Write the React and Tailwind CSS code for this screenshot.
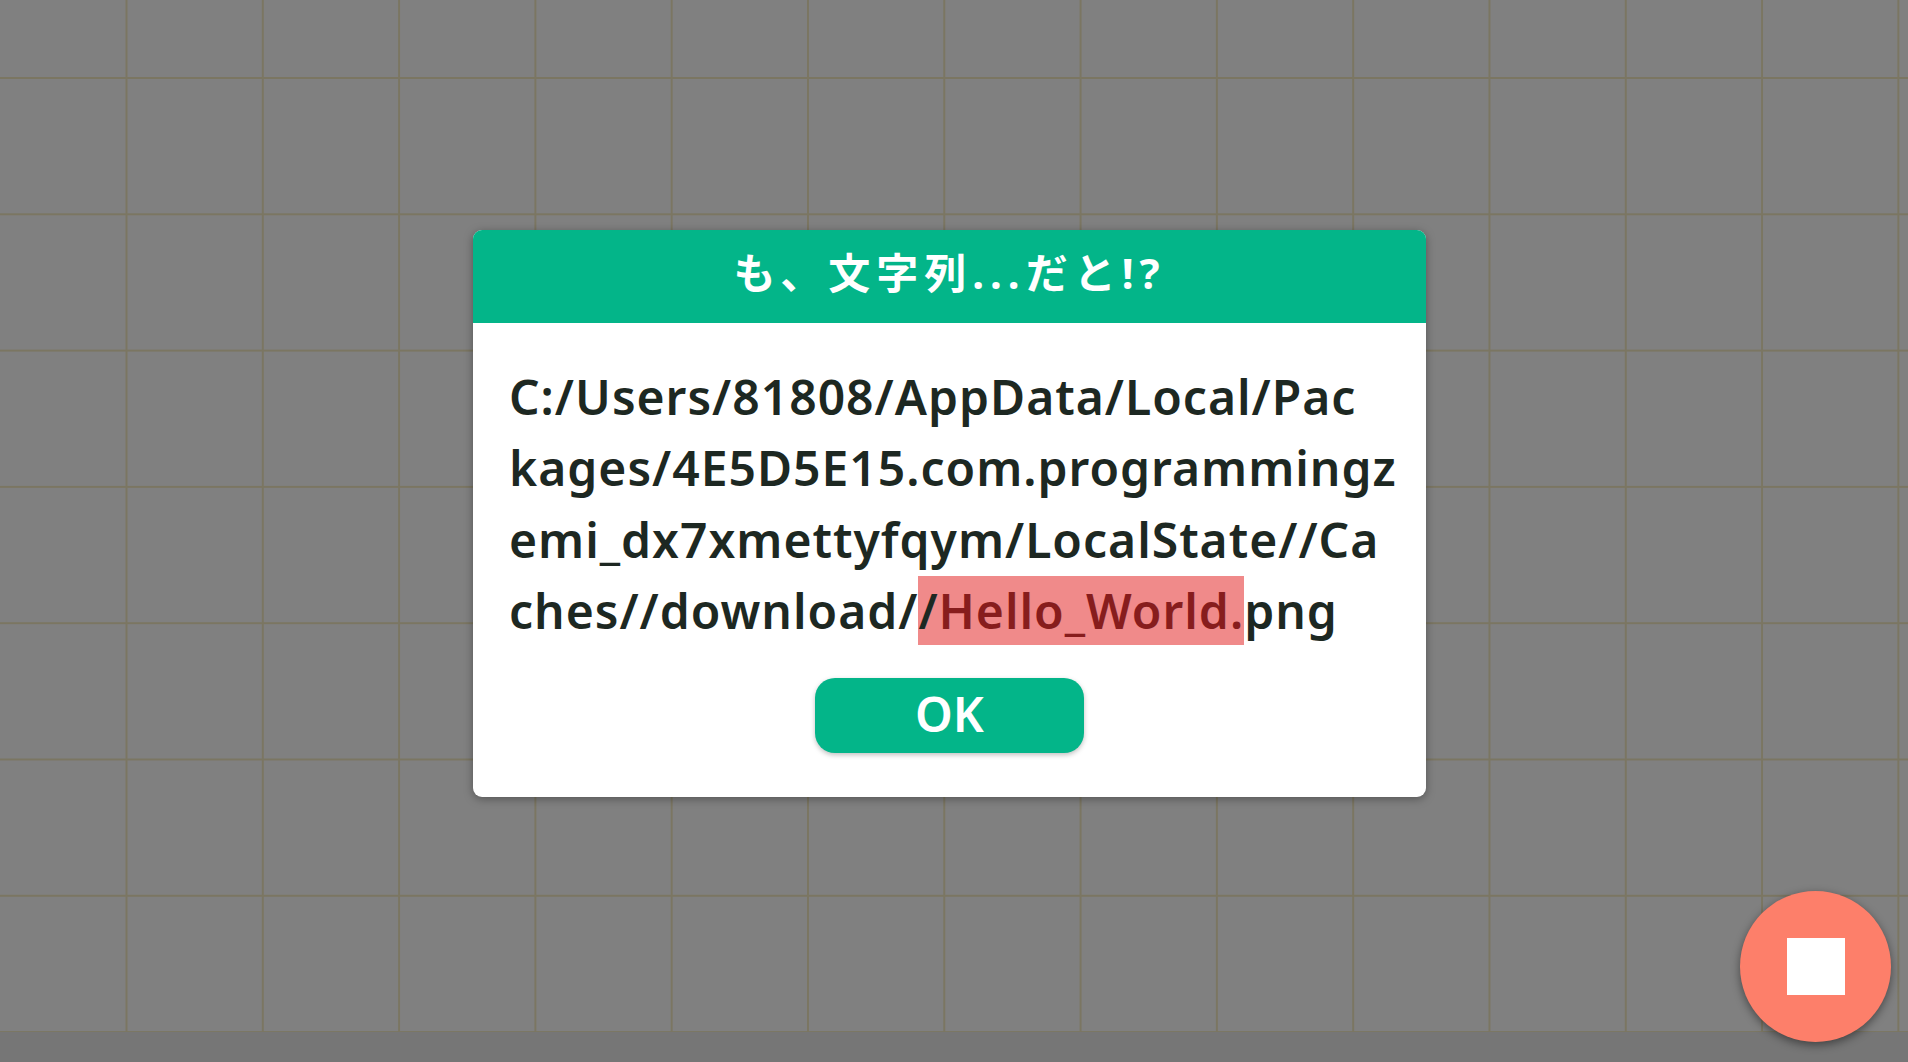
export default function App() {
  const font = { fontFamily: '"Noto Sans", "Noto Sans CJK JP", sans-serif' };
  return (
    <div className="w-[1908px] h-[1062px] flex flex-col bg-[#808080] overflow-hidden relative" style={font}>
      <div className="h-[1032px] flex items-center justify-center pr-[9px] pb-[5px] bg-[#808080] bg-[linear-gradient(to_right,#7b7662_2px,transparent_2px),linear-gradient(to_bottom,#7b7662_2px,transparent_2px)] bg-[size:136.3px_136.3px] bg-[position:125.5px_77px]">
        <div className="w-[953px] h-[567px] flex flex-col bg-white rounded-[9px] overflow-hidden shadow-[0_2px_10px_rgba(0,0,0,0.35)]">
          <div className="h-[93px] shrink-0 flex items-center justify-center pb-[8px] bg-[#03b589] text-white text-[42px] font-bold tracking-[6px]">
            も、文字列...だと!?
          </div>
          <div className="flex-1 flex flex-col px-[36px] pt-[38px]">
            <div className="flex flex-col text-[48px] leading-[71.4px] font-semibold tracking-[1px] text-[#1d2822] whitespace-nowrap">
              <div>C:/Users/81808/AppData/Local/Pac</div>
              <div>kages/4E5D5E15.com.programmingz</div>
              <div>emi_dx7xmettyfqym/LocalState//Ca</div>
              <div>
                ches//download/<span className="bg-[#f08a8a] text-[#1d2822] py-[2px]">/<span className="text-[#871d1d]">Hello_World.</span></span>png
              </div>
            </div>
            <div className="flex justify-center mt-[31px]">
              <button className="w-[269px] h-[75px] rounded-[20px] bg-[#03b589] text-white text-[48px] font-semibold flex items-center justify-center pb-[3px] shadow-[0_2px_5px_rgba(0,0,0,0.25)]">
                OK
              </button>
            </div>
          </div>
        </div>
      </div>
      <div className="h-[30px] bg-[#767676]"></div>
      <button className="absolute right-[17px] bottom-[20px] w-[151px] h-[151px] rounded-full bg-[#fd7f6a] flex items-center justify-center shadow-[0_3px_10px_rgba(0,0,0,0.45)]">
        <div className="w-[58px] h-[57px] bg-white"></div>
      </button>
    </div>
  );
}
